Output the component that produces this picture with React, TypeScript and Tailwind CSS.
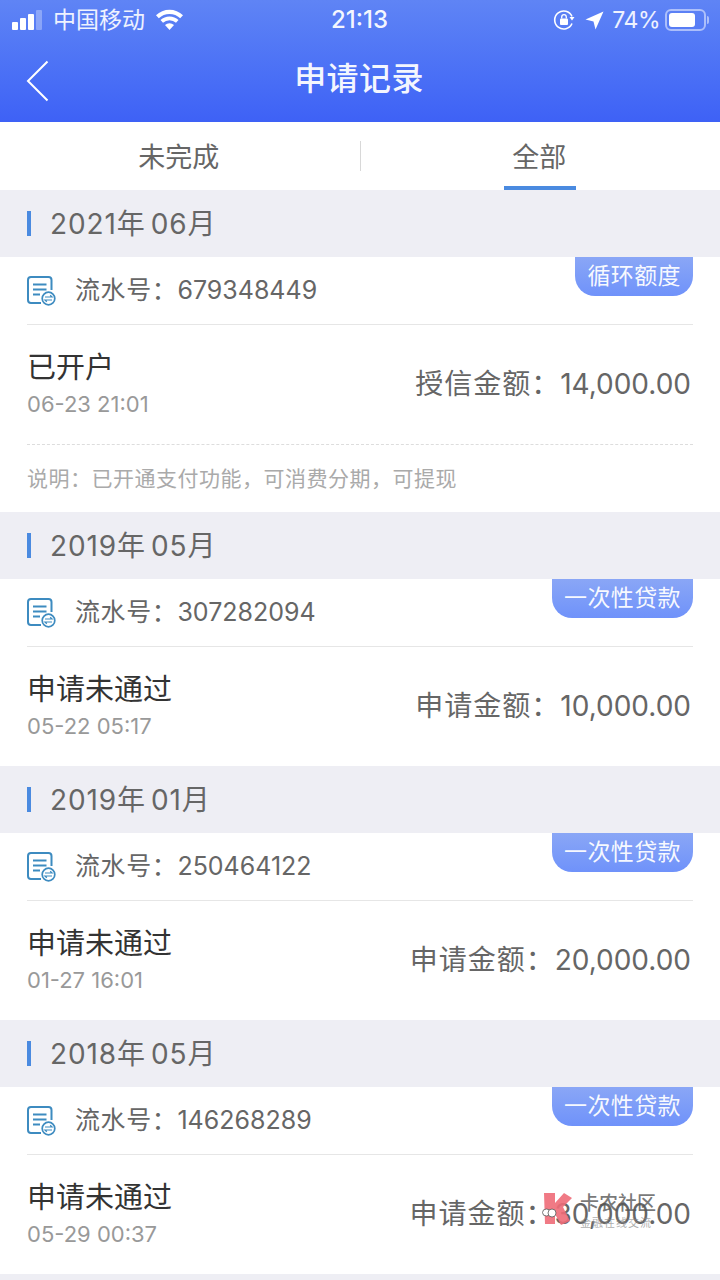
import React from 'react';

const font = { fontFamily: 'Inter, "Noto Sans CJK SC", sans-serif' };

const records = [
  { month: '2021年', mm: '06月', serial: '679348449', tag: '循环额度', status: '已开户', time: '06-23 21:01', label: '授信金额：', amount: '14,000.00', note: '说明：已开通支付功能，可消费分期，可提现' },
  { month: '2019年', mm: '05月', serial: '307282094', tag: '一次性贷款', status: '申请未通过', time: '05-22 05:17', label: '申请金额：', amount: '10,000.00' },
  { month: '2019年', mm: '01月', serial: '250464122', tag: '一次性贷款', status: '申请未通过', time: '01-27 16:01', label: '申请金额：', amount: '20,000.00' },
  { month: '2018年', mm: '05月', serial: '146268289', tag: '一次性贷款', status: '申请未通过', time: '05-29 00:37', label: '申请金额：', amount: '30,000.00' },
];

const SerialIcon = () => (
  <svg width="30" height="30" viewBox="0 0 30 30" fill="none">
    <path d="M14 27H4A3 3 0 0 1 1 24V4A3 3 0 0 1 4 1H21.500A3 3 0 0 1 24.500 4V14" stroke="#3d8bc0" strokeWidth="2" />
    <path d="M6 8.500H19.500M6 13.500H19.500M6 18.500H13" stroke="#3d8bc0" strokeWidth="2" />
    <circle cx="21.500" cy="22.500" r="6.300" fill="#ffffff" stroke="#3d8bc0" strokeWidth="1.700" />
    <path d="M18 21H25L23.200 19.300M25 24H18L19.800 25.700" stroke="#3d8bc0" strokeWidth="1.200" />
  </svg>
);

const StatusBar = () => (
  <div className="h-10 flex items-center justify-between pl-3 pr-[11px] text-white">
    <div className="flex items-center w-[260px]">
      <div className="flex items-end gap-[2px] h-5">
        <div className="w-[6px] h-2 bg-white rounded-[1px]" />
        <div className="w-[6px] h-3 bg-white rounded-[1px]" />
        <div className="w-[6px] h-4 bg-white rounded-[1px]" />
        <div className="w-[6px] h-5 bg-white/30 rounded-[1px]" />
      </div>
      <span className="ml-[11px] text-[23px] leading-none text-white/90">中国移动</span>
      <svg className="ml-[10px]" width="29" height="22" viewBox="0 0 29 22" fill="white">
        <path d="M14.500 21 L10 16 A7 7 0 0 1 19 16Z" />
        <path d="M8 13.800 L5.500 11 A13 13 0 0 1 23.500 11 L21 13.800 A9.500 9.500 0 0 0 8 13.800Z" />
        <path d="M3.800 9.200 L1 6.200 A19.500 19.500 0 0 1 28 6.200 L25.200 9.200 A15.500 15.500 0 0 0 3.800 9.200Z" />
      </svg>
    </div>
    <span className="text-[24px] leading-none font-medium text-white/95 mr-[2px]">21:13</span>
    <div className="flex items-center justify-end w-[260px]">
      <svg width="22" height="22" viewBox="0 0 22 22" fill="none">
        <path d="M19 14.500A9 9 0 1 1 19 7.500" stroke="white" strokeWidth="1.600" />
        <path d="M16.500 8H21.500L19 11.500Z" fill="white" />
        <rect x="7" y="9.500" width="8" height="6.500" rx="1" fill="white" />
        <path d="M8.700 9.500V8A2.300 2.300 0 0 1 13.300 8V9.500" stroke="white" strokeWidth="1.300" />
      </svg>
      <svg className="ml-[10px]" width="19" height="19" viewBox="0 0 19 19" fill="white">
        <path d="M18.500 0.500 L10.500 18.500 L8.500 10.500 L0.500 8.500Z" />
      </svg>
      <span className="ml-[8px] text-[23px] leading-none text-white/90 tracking-[-0.5px]">74%</span>
      <div className="ml-[5px] w-[41px] h-[22px] rounded-[6px] border-2 border-white/50 p-[2px]">
        <div className="h-full w-[26px] bg-white rounded-[3px]" />
      </div>
      <div className="ml-[1px] w-[2px] h-[8px] bg-white/50 rounded-r-sm" />
    </div>
  </div>
);

const Record = ({ r }: { r: (typeof records)[number] }) => (
  <section>
    <div className="h-[67px] bg-[#eeeef4] pl-[27px] flex items-center">
      <div className="w-1 h-[25px] bg-[#4a8ae0]" />
      <h2 className="ml-5 text-[28px] leading-none text-[#666666] flex gap-[5px] tracking-[0.9px] -translate-x-px">
        <span>{r.month}</span>
        <span>{r.mm}</span>
      </h2>
    </div>
    <div className="bg-white px-[27px] relative">
      <div className="absolute top-0 right-[27px] h-[39px] px-3 rounded-b-[20px] bg-gradient-to-b from-[#8aa6f6] to-[#6f92fa] text-white/95 text-[23px] leading-[38px] tracking-[0.4px]">
        {r.tag}
      </div>
      <div className="h-[68px] border-b border-[#e6e6e6] flex items-center">
        <SerialIcon />
        <span className="ml-[18px] text-[25px] leading-none text-[#666666]">
          <span className="tracking-[0.6px]">流水号：</span>
          {r.serial}
        </span>
      </div>
      <div className="h-[119px] flex items-center justify-between pr-[2px]">
        <div className="-mt-[2px]">
          <div className="text-[29px] leading-[38px] text-[#333333]">{r.status}</div>
          <div className="mt-[3px] text-[22px] leading-[28px] text-[#999999]">{r.time}</div>
        </div>
        <div className="text-[28px] leading-none text-[#666666] -mt-[1px] flex">
          <span className="tracking-[1px]">{r.label}</span>
          <span>{r.amount}</span>
        </div>
      </div>
      {r.note && (
        <div className="h-[68px] border-t border-dashed border-[#dddddd] flex items-center text-[21px] text-[#aaaaaa] tracking-[0.5px]">
          {r.note}
        </div>
      )}
    </div>
  </section>
);

export default function App() {
  return (
    <div className="w-[720px] h-[1280px] overflow-hidden bg-[#eeeef4] relative" style={font}>
      <header className="h-[122px] bg-gradient-to-b from-[#5f84f5] to-[#3e61f6]">
        <StatusBar />
        <div className="h-[82px] flex items-center justify-center relative">
          <svg className="absolute left-[26px] top-[20px]" width="24" height="42" viewBox="0 0 24 42" fill="none">
            <path d="M21.500 1.500L2 21L21.500 40.500" stroke="white" strokeWidth="2" />
          </svg>
          <h1 className="text-[32px] leading-none font-medium text-white/95 -mt-1 ml-[-2px] tracking-[0.4px]">申请记录</h1>
        </div>
      </header>
      <nav className="h-[68px] bg-white flex items-center relative">
        <div className="flex-1 text-center text-[27px] leading-none text-[#666666] mt-[3px] -translate-x-px">未完成</div>
        <div className="w-px h-[30px] bg-[#d8d8d8]" />
        <div className="flex-1 text-center text-[27px] leading-none text-[#666666] mt-[3px] -translate-x-px">全部</div>
        <div className="absolute bottom-0 left-[504px] w-[72px] h-1 bg-[#4a8ae0]" />
      </nav>
      {records.map((r) => (
        <Record key={r.serial} r={r} />
      ))}
      {/* watermark */}
      <div className="absolute left-[542px] top-[1192px] flex items-start pointer-events-none">
        <svg width="32" height="34" viewBox="0 0 32 34">
          <path d="M2 1H13V11L22 1L30 6L21 15L28 29L19 33L13 22V32H3Z" fill="#ee6c78" fillOpacity="0.9" />
          <ellipse cx="4.500" cy="20.500" rx="4" ry="3.500" fill="#ffffff" stroke="#555555" strokeWidth="0.800" />
          <ellipse cx="10" cy="21" rx="4" ry="4" fill="#ffffff" stroke="#555555" strokeWidth="0.800" />
        </svg>
        <div className="ml-[6px] mt-[1px]">
          <div className="text-[19px] leading-[22px] font-medium text-[#555555]/80">卡农社区</div>
          <div className="mt-[2px] text-[11px] leading-3 text-[#888888]/70 tracking-[1px]">金融在线交流</div>
        </div>
      </div>
    </div>
  );
}
